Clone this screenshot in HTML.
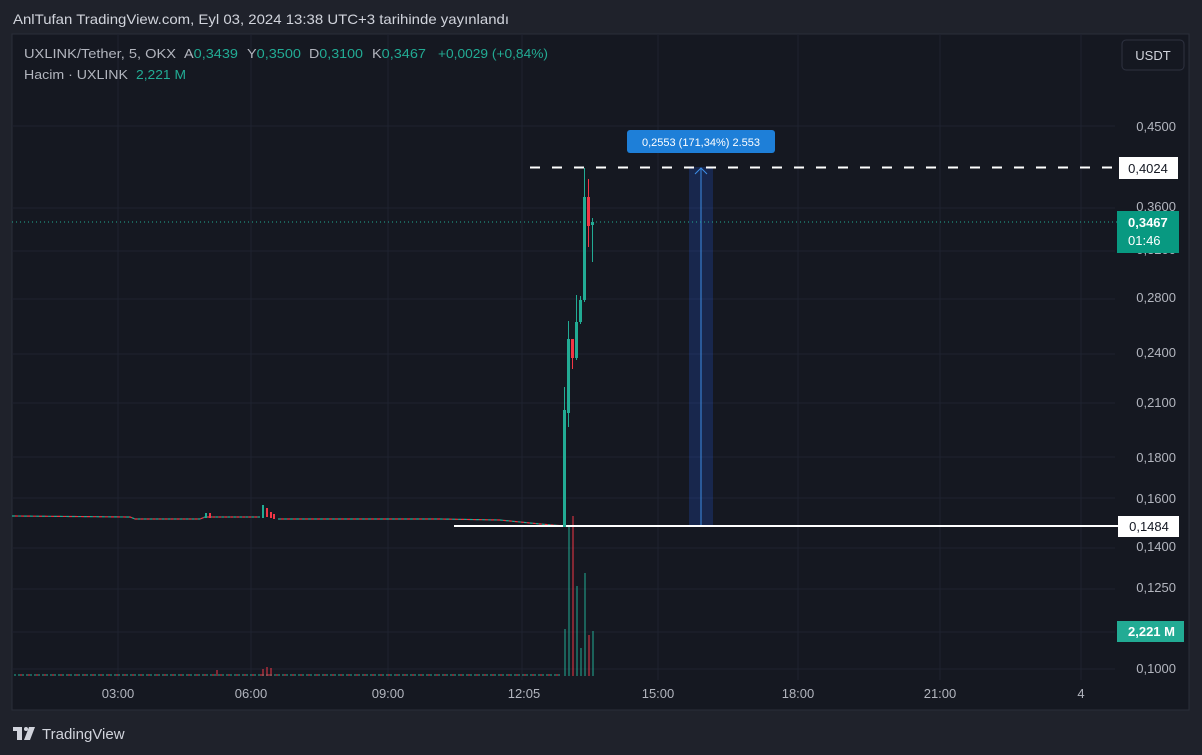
<!DOCTYPE html>
<html><head><meta charset="utf-8"><style>
html,body{margin:0;padding:0;width:1202px;height:755px;background:#1f222b;overflow:hidden;font-family:"Liberation Sans",sans-serif}
svg{position:absolute;left:0;top:0}
</style></head><body>
<svg width="1202" height="755" viewBox="0 0 1202 755" font-family="Liberation Sans, sans-serif">
<rect x="0" y="0" width="1202" height="755" fill="#1f222b"/>
<text x="13" y="24" fill="#d1d4dc" font-size="14" textLength="496" lengthAdjust="spacingAndGlyphs">AnlTufan TradingView.com, Eyl 03, 2024 13:38 UTC+3 tarihinde yayınlandı</text>
<rect x="12" y="34" width="1177" height="676" fill="#151821" stroke="#2a2e39" stroke-width="1"/>
<g stroke="#1e2230" stroke-width="1">
<line x1="12" y1="126" x2="1115" y2="126"/><line x1="12" y1="208" x2="1115" y2="208"/><line x1="12" y1="251" x2="1115" y2="251"/><line x1="12" y1="299" x2="1115" y2="299"/><line x1="12" y1="354" x2="1115" y2="354"/><line x1="12" y1="403" x2="1115" y2="403"/><line x1="12" y1="457" x2="1115" y2="457"/><line x1="12" y1="498" x2="1115" y2="498"/><line x1="12" y1="548" x2="1115" y2="548"/><line x1="12" y1="589" x2="1115" y2="589"/><line x1="12" y1="632" x2="1115" y2="632"/><line x1="12" y1="669" x2="1115" y2="669"/>
<line x1="118" y1="34" x2="118" y2="680"/><line x1="251" y1="34" x2="251" y2="680"/><line x1="388" y1="34" x2="388" y2="680"/><line x1="522" y1="34" x2="522" y2="680"/><line x1="658" y1="34" x2="658" y2="680"/><line x1="798" y1="34" x2="798" y2="680"/><line x1="940" y1="34" x2="940" y2="680"/><line x1="1081" y1="34" x2="1081" y2="680"/>
</g>
<g font-size="13">
<text x="24" y="58" fill="#b2b5be" textLength="152" lengthAdjust="spacingAndGlyphs">UXLINK/Tether, 5, OKX</text>
<text x="184" y="58" fill="#b2b5be" textLength="54" lengthAdjust="spacingAndGlyphs">A<tspan fill="#22ab94">0,3439</tspan></text>
<text x="247" y="58" fill="#b2b5be" textLength="54" lengthAdjust="spacingAndGlyphs">Y<tspan fill="#22ab94">0,3500</tspan></text>
<text x="309" y="58" fill="#b2b5be" textLength="54" lengthAdjust="spacingAndGlyphs">D<tspan fill="#22ab94">0,3100</tspan></text>
<text x="372" y="58" fill="#b2b5be" textLength="54" lengthAdjust="spacingAndGlyphs">K<tspan fill="#22ab94">0,3467</tspan></text>
<text x="438" y="58" fill="#22ab94" textLength="110" lengthAdjust="spacingAndGlyphs">+0,0029 (+0,84%)</text>
<text x="24" y="79" fill="#b2b5be" textLength="104" lengthAdjust="spacingAndGlyphs">Hacim · UXLINK</text>
<text x="136" y="79" fill="#22ab94" textLength="50" lengthAdjust="spacingAndGlyphs">2,221 M</text>
</g>
<rect x="1122" y="40" width="62" height="30" rx="4" fill="#151821" stroke="#2e3240"/>
<text x="1153" y="60" fill="#d1d4dc" font-size="13" text-anchor="middle">USDT</text>
<g fill="#b2b5be" font-size="13" text-anchor="end">
<text x="1176" y="131">0,4500</text><text x="1176" y="211">0,3600</text><text x="1176" y="254">0,3200</text><text x="1176" y="302">0,2800</text><text x="1176" y="357">0,2400</text><text x="1176" y="407">0,2100</text><text x="1176" y="462">0,1800</text><text x="1176" y="503">0,1600</text><text x="1176" y="551">0,1400</text><text x="1176" y="592">0,1250</text><text x="1176" y="673">0,1000</text>
</g>
<g fill="#b2b5be" font-size="13" text-anchor="middle">
<text x="118" y="698">03:00</text><text x="251" y="698">06:00</text><text x="388" y="698">09:00</text><text x="524" y="698">12:05</text><text x="658" y="698">15:00</text><text x="798" y="698">18:00</text><text x="940" y="698">21:00</text><text x="1081" y="698">4</text>
</g>
<g stroke-width="1.2">
<polyline points="12,516 130,517 135,519 200,519 205,517 260,517" fill="none" stroke="#22ab94" stroke-dasharray="3 3"/>
<polyline points="12,516 130,517 135,519 200,519 205,517 260,517" fill="none" stroke="#f23645" stroke-dasharray="3 3" stroke-dashoffset="3"/>
<polyline points="278,519 380,519 440,519 500,520 540,524 565,526" fill="none" stroke="#22ab94" stroke-dasharray="3 3"/>
<polyline points="278,519 380,519 440,519 500,520 540,524 565,526" fill="none" stroke="#f23645" stroke-dasharray="3 3" stroke-dashoffset="3"/>
</g>
<rect x="262" y="505" width="2" height="13" fill="#22ab94"/><rect x="266" y="508" width="2" height="9" fill="#f23645"/><rect x="270" y="512" width="2" height="6" fill="#f23645"/><rect x="273" y="514" width="2" height="5" fill="#f23645"/>
<rect x="205" y="513" width="2" height="5" fill="#22ab94"/><rect x="209" y="513" width="2" height="5" fill="#f23645"/>
<line x1="14" y1="675" x2="562" y2="675" stroke="#22ab94" stroke-opacity="0.5" stroke-width="2" stroke-dasharray="2 2"/>
<line x1="14" y1="675" x2="562" y2="675" stroke="#f23645" stroke-opacity="0.5" stroke-width="2" stroke-dasharray="2 6" stroke-dashoffset="2"/>
<rect x="262" y="669" width="2" height="7" fill="#f23645" fill-opacity=".5"/><rect x="266" y="667" width="2" height="9" fill="#f23645" fill-opacity=".5"/><rect x="270" y="668" width="2" height="8" fill="#f23645" fill-opacity=".5"/><rect x="216" y="670" width="2" height="6" fill="#f23645" fill-opacity=".5"/>
<g fill-opacity="0.5">
<rect x="564" y="629" width="2" height="47" fill="#22ab94"/><rect x="568" y="527" width="2" height="149" fill="#22ab94"/><rect x="572" y="516" width="2" height="160" fill="#f23645"/><rect x="576" y="586" width="2" height="90" fill="#22ab94"/><rect x="580" y="648" width="2" height="28" fill="#22ab94"/><rect x="584" y="573" width="2" height="103" fill="#22ab94"/><rect x="588" y="635" width="2" height="41" fill="#f23645"/><rect x="592" y="631" width="2" height="45" fill="#22ab94"/>
</g>
<rect x="689" y="167" width="24" height="359" fill="#2962ff" fill-opacity="0.2"/>
<line x1="701" y1="168" x2="701" y2="526" stroke="#3d8ee6" stroke-width="1"/>
<polyline points="695,174 701,168 707,174" fill="none" stroke="#3d8ee6" stroke-width="1"/>
<rect x="627" y="130" width="148" height="23" rx="3" fill="#1e7fd8"/>
<text x="701" y="146" fill="#fff" font-size="11" text-anchor="middle">0,2553 (171,34%) 2.553</text>
<line x1="530" y1="167.5" x2="1115" y2="167.5" stroke="#fff" stroke-width="2" stroke-dasharray="10 12"/>
<line x1="454" y1="526" x2="1118" y2="526" stroke="#fff" stroke-width="2"/>
<line x1="12" y1="222" x2="1117" y2="222" stroke="#22ab94" stroke-width="1" stroke-dasharray="1 3"/>
<g stroke-width="1">
<line x1="564.5" y1="387" x2="564.5" y2="527" stroke="#22ab94"/><rect x="563" y="410" width="3" height="117" fill="#22ab94"/>
<line x1="568.5" y1="321" x2="568.5" y2="427" stroke="#22ab94"/><rect x="567" y="339" width="3" height="74" fill="#22ab94"/>
<line x1="572.5" y1="339" x2="572.5" y2="369" stroke="#f23645"/><rect x="571" y="339" width="3" height="19" fill="#f23645"/>
<line x1="576.5" y1="295" x2="576.5" y2="360" stroke="#22ab94"/><rect x="575" y="322" width="3" height="36" fill="#22ab94"/>
<line x1="580.5" y1="296" x2="580.5" y2="324" stroke="#22ab94"/><rect x="579" y="300" width="3" height="22" fill="#22ab94"/>
<line x1="584.5" y1="168" x2="584.5" y2="302" stroke="#22ab94"/><rect x="583" y="197" width="3" height="103" fill="#22ab94"/>
<line x1="588.5" y1="179" x2="588.5" y2="247" stroke="#f23645"/><rect x="587" y="197" width="3" height="29" fill="#f23645"/>
<line x1="592.5" y1="218" x2="592.5" y2="262" stroke="#22ab94"/><rect x="591" y="222" width="3" height="3" fill="#22ab94"/>
</g>
<rect x="1119" y="157" width="59" height="22" fill="#fff"/><text x="1148" y="173" fill="#131722" font-size="13" text-anchor="middle">0,4024</text>
<rect x="1118" y="516" width="61" height="21" fill="#fff"/><text x="1149" y="531" fill="#131722" font-size="13" text-anchor="middle">0,1484</text>
<rect x="1117" y="211" width="62" height="42" fill="#089981"/><text x="1128" y="227" fill="#fff" font-size="13" font-weight="bold">0,3467</text><text x="1128" y="245" fill="#fff" font-size="13">01:46</text>
<rect x="1117" y="621" width="67" height="21" fill="#22ab94"/><text x="1128" y="636" fill="#fff" font-size="13" font-weight="bold">2,221 M</text>
<g fill="#d1d4dc"><rect x="13" y="727" width="9" height="4"/><rect x="17" y="727" width="5" height="13"/><circle cx="26" cy="729" r="2"/><polygon points="29,727 35,727 30,740 24,740"/></g>
<text x="42" y="739" fill="#d1d4dc" font-size="15">TradingView</text>
</svg>
</body></html>
